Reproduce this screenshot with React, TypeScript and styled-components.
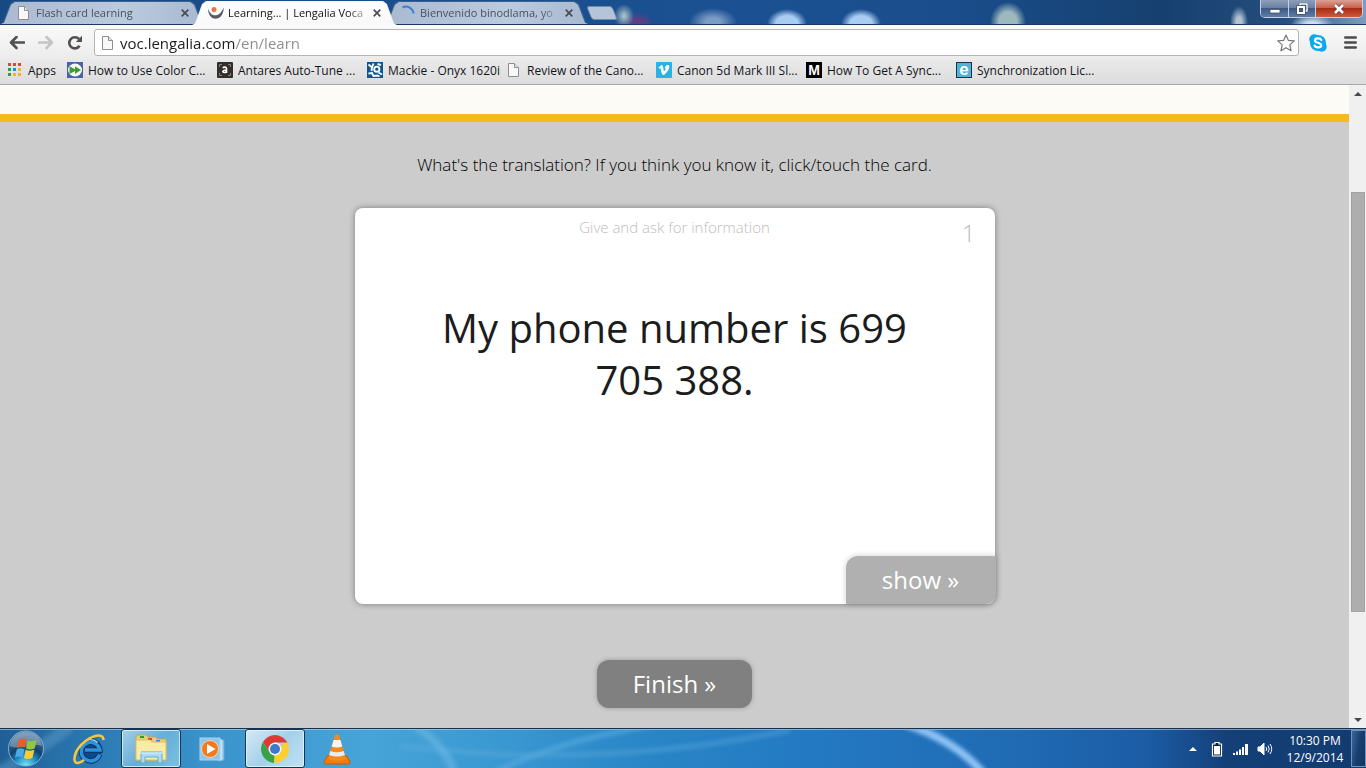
import React from "react";
import styled, { createGlobalStyle, css } from "styled-components";

const GlobalStyle = createGlobalStyle`
  *, *::before, *::after { box-sizing: border-box; }
  body { margin: 0; font-family: "Open Sans", "Noto Sans", sans-serif; color: #1c1c1c; }
  button { font: inherit; border: 0; padding: 0; background: none; color: inherit; cursor: pointer; }
  p, h1 { margin: 0; }
  a { color: inherit; text-decoration: none; }
  svg { display: block; flex: none; }
`;

const Screen = styled.div`
  display: flex;
  flex-direction: column;
  height: 100vh;
  min-height: 480px;
  overflow: hidden;
`;

/* ---------- tab strip ---------- */

const TabStrip = styled.header`
  display: flex;
  height: 25px;
  padding-top: 1px;
  border-bottom: 1px solid #173a66;
  background:
    radial-gradient(ellipse 10px 12px at 624px 16px, #b4c9cc 0, transparent 100%),
    radial-gradient(ellipse 16px 12px at 638px 24px, #5a3f86 40%, transparent 100%),
    radial-gradient(ellipse 24px 14px at 713px 22px, #7c9cc4 30%, transparent 100%),
    radial-gradient(ellipse 20px 15px at 787px 24px, #a9cdf2 55%, transparent 100%),
    radial-gradient(ellipse 20px 15px at 861px 24px, #a9cdf2 55%, transparent 100%),
    radial-gradient(ellipse 18px 20px at 1008px 22px, #9db9bd 50%, transparent 100%),
    radial-gradient(ellipse 9px 16px at 1239px 22px, #b3c2d0 30%, transparent 100%),
    radial-gradient(ellipse 22px 12px at 1312px 26px, #cfe2f5 30%, transparent 100%),
    linear-gradient(90deg, #174a85 0%, #1b5192 55%, #1a4d8b 70%, #16406f 85%, #254d7d 94%, #7f9dbf 100%);
`;

const tabShape = `polygon(0 100%, 3px 94%, 10px 12%, 14px 0, calc(100% - 14px) 0, calc(100% - 10px) 12%, calc(100% - 3px) 94%, 100% 100%)`;

const Tab = styled.div<{ $active?: boolean }>`
  position: relative;
  z-index: ${(p) => (p.$active ? 2 : 1)};
  display: flex;
  align-items: center;
  flex: 0 1 205px;
  min-width: 0;
  height: ${(p) => (p.$active ? 24 : 23)}px;
  padding: 0 15px 0 16px;
  gap: 4px;
  background: ${(p) => (p.$active ? "#f2f3f5" : "#3d5f8b")};
  clip-path: ${tabShape};
  font-size: 11px;
  line-height: 22px;
  color: ${(p) => (p.$active ? "#111" : "#4b4f5c")};
  & + & { margin-left: -13px; }
  &::before {
    content: "";
    position: absolute;
    z-index: -1;
    inset: 1px 1px 0;
    clip-path: ${tabShape};
    background: ${(p) =>
      p.$active ? "linear-gradient(#ffffff, #f8f8f8)" : "linear-gradient(100deg, #a9b9d0, #bccade 60%, #a6b8d0)"};
  }
`;

const TabTitle = styled.a`
  flex: 1;
  min-width: 0;
  overflow: hidden;
  white-space: nowrap;
  mask-image: linear-gradient(90deg, #000 calc(100% - 20px), rgba(0, 0, 0, 0.15));
`;

const TabClose = styled.button`
  display: grid;
  place-items: center;
  width: 10px;
  height: 16px;
  color: #4a4d55;
`;

const NewTab = styled.button`
  width: 26px;
  height: 14px;
  margin-top: 5px;
  border: 1px solid #6d8cb3;
  border-radius: 3px;
  background: #b6c4d8;
  transform: skewX(22deg);
`;

const WindowControls = styled.div`
  display: flex;
  height: 18px;
  margin: -1px 3px 0 auto;
  border: 1px solid #c3d1e2;
  border-top: 0;
  border-radius: 0 0 5px 5px;
  overflow: hidden;
`;

const WindowButton = styled.button<{ $close?: boolean }>`
  display: grid;
  place-items: center;
  width: ${(p) => (p.$close ? 47 : 27)}px;
  background: ${(p) =>
    p.$close
      ? "linear-gradient(#dba194, #c8614e 45%, #a92c15 50%, #cf5a3c)"
      : "linear-gradient(#8d9fb8, #6b82a3 45%, #3d5a83 50%, #5f7da6)"};
  & + & { border-left: 1px solid #c3d1e2; }
`;

/* ---------- toolbar ---------- */

const Toolbar = styled.div`
  display: flex;
  align-items: center;
  height: 35px;
  padding: 0 8px 0 9px;
  background: linear-gradient(#fafafa, #ebebeb);
`;

const ToolButton = styled.button<{ $gap?: number }>`
  display: grid;
  place-items: center;
  width: 16px;
  height: 20px;
  margin-right: ${(p) => p.$gap ?? 0}px;
`;

const AddressBar = styled.form`
  display: flex;
  align-items: center;
  flex: 1;
  gap: 4px;
  height: 27px;
  margin-right: 10px;
  padding: 0 5px;
  border: 1px solid #b4b4b4;
  border-radius: 3px;
  background: #fff;
`;

const AddressInput = styled.input`
  flex: 1;
  min-width: 0;
  height: 24px;
  padding: 0;
  border: 0;
  outline: 0;
  font: 15px/24px "Open Sans", sans-serif;
  color: #222;
  -webkit-text-fill-color: transparent;
  background: linear-gradient(90deg, #1c1c1c 115px, #8c8c8c 115px);
  background-clip: text;
`;

const Bookmarks = styled.nav`
  display: flex;
  height: 25px;
  padding: 0 7px;
  overflow: hidden;
  border-bottom: 1px solid #a9a9a9;
  background: linear-gradient(#e9e9e9, #dcdcdc);
`;

const Bookmark = styled.a<{ $width: number }>`
  display: flex;
  flex: none;
  align-items: center;
  gap: 5px;
  width: ${(p) => p.$width}px;
  height: 20px;
  font-size: 12px;
  white-space: nowrap;
  color: #14141c;
`;

/* ---------- page ---------- */

const Viewport = styled.div`
  display: flex;
  flex: 1;
  min-height: 0;
`;

const Page = styled.main`
  display: flex;
  flex-direction: column;
  align-items: center;
  flex: 1;
  min-width: 0;
  overflow: hidden;
  background: #ccc;
`;

const PageHeader = styled.div`
  flex: none;
  align-self: stretch;
  height: 37px;
  border-bottom: 8px solid #f8b920;
  background: #fcfbf6;
`;

const Prompt = styled.p`
  margin: 31px 0;
  font-size: 17px;
  line-height: 24px;
  font-weight: 300;
  color: #000;
`;

const Card = styled.section`
  display: flex;
  flex-direction: column;
  flex: none;
  width: min(640px, 94%);
  height: 396px;
  border-radius: 8px;
  background: #fff;
  box-shadow: 0 0 6px rgba(0, 0, 0, 0.4);
`;

const CardTop = styled.div`
  display: grid;
  grid-template-columns: 1fr auto 1fr;
  padding: 7px 19px 0;
  color: #bdbdbd;
  font-weight: 300;
`;

const Topic = styled.p`
  grid-column: 2;
  font-size: 15px;
  line-height: 24px;
`;

const CardNumber = styled.p`
  justify-self: end;
  font-size: 24px;
  line-height: 36px;
`;

const Phrase = styled.h1`
  flex: 1;
  padding: 51px 64px 0;
  font-size: 40px;
  line-height: 52px;
  font-weight: 400;
  text-align: center;
`;

const actionButton = css`
  height: 48px;
  font-size: 24px;
  line-height: 48px;
  color: #fff;
`;

const ShowButton = styled.button`
  ${actionButton}
  align-self: flex-end;
  width: 150px;
  margin-right: -1px;
  border-radius: 12px 0 10px 0;
  background: #b0b0b0;
  box-shadow: 0 0 6px rgba(0, 0, 0, 0.2);
`;

const FinishButton = styled.button`
  ${actionButton}
  flex: none;
  width: 155px;
  margin-top: 56px;
  border-radius: 12px;
  background: #808080;
  box-shadow: 0 0 5px rgba(0, 0, 0, 0.25);
`;

const Scrollbar = styled.div`
  display: grid;
  grid-template-rows: 17px 1fr 17px;
  flex: none;
  width: 17px;
  background: #f0f0f0;
`;

const ScrollButton = styled.button`
  display: grid;
  place-items: center;
`;

const ScrollTrack = styled.div`
  padding: 90px 1px 0 2px;
`;

const ScrollThumb = styled.div`
  height: 81%;
  max-height: 421px;
  border: 1px solid #a2a2a2;
  background: #aeaeae;
`;

/* ---------- taskbar ---------- */

const Taskbar = styled.footer`
  position: relative;
  isolation: isolate;
  display: flex;
  align-items: stretch;
  flex: none;
  height: 40px;
  border-top: 1px solid #16304e;
  background: linear-gradient(90deg, #205f95 0%, #2b7ab3 7%, #3a93cb 15%, #47a4d8 27%, #3b99d2 36%, #2a86c6 47%, #2379c2 60%, #1f69b2 76%, #1b5ca5 84%, #143f77 90%, #123c70 100%);
  box-shadow: inset 0 1px 0 rgba(190, 215, 235, 0.6);
`;

const Wallpaper = styled.svg`
  position: absolute;
  z-index: -1;
  inset: 1px 0 0;
  width: 100%;
  height: 38px;
`;

const StartButton = styled.button`
  display: grid;
  place-items: center;
  width: 54px;
  margin-right: 5px;
`;

const TaskButton = styled.button<{ $open?: boolean; $focused?: boolean }>`
  display: grid;
  place-items: center;
  width: 60px;
  margin-right: 2px;
  border: 1px solid transparent;
  border-radius: 3px;
  ${(p) =>
    p.$open &&
    css`
      border-color: #123653;
      background: ${p.$focused
        ? "linear-gradient(135deg, #d5e9f5, #a5d0ea 50%, #c0e2f4)"
        : "linear-gradient(135deg, #a5cfe8, #64aed9 50%, #7cc1e4)"};
      box-shadow: inset 0 0 0 1px rgba(235, 247, 255, 0.75);
    `}
`;

const Tray = styled.div`
  display: flex;
  align-items: center;
  gap: 8px;
  margin-left: auto;
`;

const TrayButton = styled.button`
  display: grid;
  place-items: center;
  width: 16px;
  height: 20px;
`;

const Clock = styled.time`
  width: 68px;
  font-size: 12px;
  line-height: 17px;
  text-align: center;
  white-space: nowrap;
  color: #fff;
`;

const ShowDesktop = styled.button`
  align-self: stretch;
  width: 15px;
  margin: 1px 0 1px -6px;
  border: 1px solid #6f94bd;
  background: linear-gradient(100deg, #3d6797, #173f70 50%, #123661);
`;

/* ---------- drawings ---------- */

const FileIcon = () => (
  <svg width="16" height="16" viewBox="0 0 16 16" fill="#f8f8f8" stroke="#8e8e8e">
    <path d="M2.500 1.500h6l4 4v9h-10z" />
    <path d="M8.500 1.500v4h4" fill="#e4e4e4" />
  </svg>
);

const CloseIcon = () => (
  <svg width="8" height="8" viewBox="0 0 8 8" stroke="currentColor" strokeWidth="1.700">
    <path d="M.7.7l6.600 6.600M7.300.7L.7 7.300" />
  </svg>
);

const LengaliaIcon = () => (
  <svg width="16" height="16" viewBox="0 0 16 16">
    <circle cx="6" cy="4.500" r="2.500" fill="#e8763f" />
    <path d="M0 3.500C2 9 4.500 10.500 8 10.200 11.500 10 13.500 7 15.800 2.500 15.500 10 12 13.800 7.500 13.800 3 13.800 0 9 0 3.500z" fill="#5b5b63" />
  </svg>
);

const SpinnerIcon = () => (
  <svg width="16" height="16" viewBox="0 0 16 16" fill="none" stroke="#3f7fd0" strokeWidth="2">
    <path d="M2.500 2.500A7.500 7.500 0 0 1 13.500 8.500" />
  </svg>
);

const AppsIcon = () => {
  const colors = ["#d64a3b", "#d64a3b", "#d64a3b", "#2f9a57", "#3d7fe0", "#eeb32b", "#2f9a57", "#eeb32b", "#eeb32b"];
  return (
    <svg width="16" height="16" viewBox="0 0 16 16">
      {colors.map((c, i) => (
        <rect key={i} x={1 + (i % 3) * 5} y={1 + Math.floor(i / 3) * 5} width="3" height="3" fill={c} />
      ))}
    </svg>
  );
};

const ForwardSiteIcon = () => (
  <svg width="16" height="16" viewBox="0 0 16 16">
    <rect width="16" height="16" fill="#4c62a8" />
    <ellipse cx="8" cy="8" rx="7" ry="6.500" fill="#f6faf4" />
    <path d="M2.500 4.200L8 7.200V4.200L14 8l-6 4V9l-5.500 3z" fill="#3d9a35" />
  </svg>
);

const Glyph = styled.span<{ $bg: string; $edge?: string; $size?: number }>`
  flex: none;
  width: 16px;
  height: 16px;
  border: 1px solid ${(p) => p.$edge ?? p.$bg};
  background: ${(p) => p.$bg};
  color: #fff;
  font: bold ${(p) => p.$size ?? 14}px/14px "Liberation Sans", sans-serif;
  text-align: center;
`;

const AntaresIcon = () => (
  <svg width="16" height="16" viewBox="0 0 16 16">
    <rect width="16" height="16" rx="1" fill="#332d2b" />
    <path d="M2.500 5V2.500H5M11 2.500h2.500V5M13.500 11v2.500H11M5 13.500H2.500V11" stroke="#8b8380" fill="none" />
    <path d="M5.800 5.900c1-1.200 3.700-1 3.700.7V11M9.400 8C5.500 7.800 5 10.500 7.200 10.500c1.400 0 2.200-.9 2.200-1.800" stroke="#fff" strokeWidth="1.600" fill="none" />
  </svg>
);

const MackieIcon = () => (
  <svg width="16" height="16" viewBox="0 0 16 16" fill="none" stroke="#fff" strokeWidth="1.900">
    <rect width="16" height="16" fill="#11558f" stroke="none" />
    <path d="M1.500 2.500L5 5.500 6.500 1.500M5 5.500L4.500 9M1.500 11.500L5 11l1.500 3 4-.5 2 1M11.500 10.500l3.500 2" />
    <circle cx="9.800" cy="7.200" r="2.600" />
    <path d="M10.500 2l3.500 1" />
  </svg>
);

const VimeoIcon = () => (
  <svg width="16" height="16" viewBox="0 0 16 16">
    <rect width="16" height="16" rx="1" fill="#27b3e6" />
    <path d="M2.500 5.500L5.500 3c1.800-.5 1.700 4.500 2.600 6.300C9.500 8 10.500 6 8.700 6.200 9.300 3.500 11 2.500 12.700 3c2 1-.7 6.800-4.500 9.800-2.700 1.300-2.700-4-3.700-6.600L3 6.500z" fill="#fff" />
  </svg>
);

const BackIcon = ({ color }: { color: string }) => (
  <svg width="16" height="14" viewBox="0 0 16 14" stroke={color} strokeWidth="2.600" fill="none">
    <path d="M7.500 1L2 6.500 7.500 12M2 6.500h13" strokeLinecap="round" strokeLinejoin="round" />
  </svg>
);

const ForwardIcon = ({ color }: { color: string }) => (
  <svg width="16" height="14" viewBox="0 0 16 14" stroke={color} strokeWidth="2.600" fill="none">
    <path d="M8.500 1L14 6.500 8.500 12M14 6.500H1" strokeLinecap="round" strokeLinejoin="round" />
  </svg>
);

const ReloadIcon = () => (
  <svg width="16" height="16" viewBox="0 0 16 16">
    <path d="M12.600 10.800A5.600 5.600 0 1 1 12 4" stroke="#505050" strokeWidth="2.600" fill="none" />
    <path d="M15 .8v6.200H8.800z" fill="#505050" />
  </svg>
);

const StarIcon = () => (
  <svg width="18" height="18" viewBox="0 0 18 18">
    <path d="M9 1l2.300 5.300 6 .6-4.500 4 1.300 5.900L9 13.700l-5.100 3.100 1.300-5.900-4.500-4 6-.6z" fill="#fff" stroke="#777" strokeWidth="1.200" strokeLinejoin="round" />
  </svg>
);

const SkypeIcon = () => (
  <svg width="18" height="18" viewBox="0 0 18 18">
    <circle cx="5.300" cy="5.300" r="5" fill="#0aa9ea" />
    <circle cx="12.700" cy="12.700" r="5" fill="#0aa9ea" />
    <circle cx="9" cy="9" r="8" fill="#0aa9ea" />
    <path d="M12.300 6C11.500 3.700 6 3.700 6 6.400c0 3 6.200 1.700 6.200 4.800 0 3-5.900 2.900-6.600.3" fill="none" stroke="#fff" strokeWidth="2.200" strokeLinecap="round" />
  </svg>
);

const MenuIcon = () => (
  <svg width="13" height="13" viewBox="0 0 13 13" stroke="#4c4c4c" strokeWidth="2.600" strokeLinecap="round">
    <path d="M1.300 1.500h10.400M1.300 6.500h10.400M1.300 11.500h10.400" />
  </svg>
);

const MinimizeIcon = () => (
  <svg width="12" height="12" viewBox="0 0 12 12">
    <rect x="1" y="6.500" width="10" height="3.500" fill="#fff" stroke="#46566f" strokeWidth=".8" />
  </svg>
);

const RestoreIcon = () => (
  <svg width="12" height="12" viewBox="0 0 12 12" fill="none">
    <path d="M4 3V1h7v7H9" stroke="#3f4f69" strokeWidth="2.600" />
    <path d="M4 3V1h7v7H9" stroke="#fff" strokeWidth="1.400" />
    <rect x="2" y="4" width="6" height="6" stroke="#3f4f69" strokeWidth="3.400" />
    <rect x="2" y="4" width="6" height="6" stroke="#fff" strokeWidth="2" />
  </svg>
);

const WindowCloseIcon = () => (
  <svg width="12" height="12" viewBox="0 0 12 12" fill="none">
    <path d="M2 2l8 8M10 2l-8 8" stroke="#5c3a3a" strokeWidth="4" />
    <path d="M2 2l8 8M10 2l-8 8" stroke="#fff" strokeWidth="2.600" />
  </svg>
);

const Triangle = ({ down, color = "#484848" }: { down?: boolean; color?: string }) => (
  <svg width="8" height="4" viewBox="0 0 8 4">
    <path d={down ? "M0 0h8L4 4z" : "M0 4h8L4 0z"} fill={color} />
  </svg>
);

const WindowsOrb = () => (
  <svg width="38" height="38" viewBox="0 0 38 38">
    <defs>
      <radialGradient id="orb" cx=".5" cy="1" r=".9">
        <stop offset="0" stopColor="#7cecff" />
        <stop offset=".35" stopColor="#1c8cc4" />
        <stop offset=".6" stopColor="#12426f" />
        <stop offset="1" stopColor="#4a7397" />
      </radialGradient>
    </defs>
    <circle cx="18" cy="18.500" r="17.500" fill="url(#orb)" stroke="#7fb0d2" />
    <path d="M2 16C4-3 32-3 34 16c-9-4-20 5-32 0z" fill="#dcebf5" opacity=".35" />
    <path d="M11 9.500c2.500-1.600 5-1.300 7.500 0l-1.700 8.300c-2.500-1.300-5-1.400-7.600 0z" fill="#ee5b2a" />
    <path d="M19.700 10.300c2.500 1.300 5 1.300 9-.2l-2 8.300c-3 1.400-6 1.400-8.700 0z" fill="#8fc642" />
    <path d="M8.800 19.200c2.500-1.400 5-1.300 7.600 0l-1.800 8.300c-2.500-1.500-5-1.400-7.600 0z" fill="#4aa9ea" />
    <path d="M17.700 19.800c2.500 1.300 5 1.300 8.700 0l-2 8.200c-3 1.400-6 1.400-8.500 0z" fill="#fcca34" />
  </svg>
);

const ExplorerEIcon = () => (
  <svg width="34" height="32" viewBox="0 0 34 32" fill="none">
    <circle cx="18.500" cy="16.500" r="11.500" fill="#0d4a8c" />
    <path d="M27.500 21.500A9.300 9.300 0 1 1 27.800 17H13" stroke="#0f3260" strokeWidth="5.400" />
    <path d="M27.500 21.500A9.300 9.300 0 1 1 27.800 17H13" stroke="#2b93dc" strokeWidth="3.600" />
    <path d="M11 10.500a9.500 9.500 0 0 1 14.500-1" stroke="#9adcff" strokeWidth="1.400" />
    <path d="M31.500 7C31.500-1 19 2.500 10 11 1 20 .5 31 6 30c2.200-.4 4.500-1.700 6-3" stroke="#f5c53c" strokeWidth="2.600" />
  </svg>
);

const FolderIcon = () => (
  <svg width="32" height="30" viewBox="0 0 32 30">
    <path d="M1 3l1-2h9l2 2h8l1 2h9v21H1z" fill="#e9cf72" stroke="#c7a951" />
    <rect x="5" y="2" width="4" height="2" fill="#2f9a3d" />
    <rect x="13" y="4" width="4" height="2" fill="#cf4a2b" />
    <rect x="21" y="6" width="4" height="2" fill="#2f8fd6" />
    <path d="M1 6h14l2 2h14v18H1z" fill="#f9eaa4" stroke="#d9bf66" />
    <path d="M6 29V18h21v11h-4v-6H10v6z" fill="#a8dcf5" stroke="#62abd8" />
    <path d="M4 19h24" stroke="#e8faff" />
  </svg>
);

const MediaPlayerIcon = () => (
  <svg width="28" height="26" viewBox="0 0 28 26">
    <path d="M19 3l6 1v20l-6 1z" fill="#9dd0ee" stroke="#5fa9d6" />
    <path d="M22 3.500v21" stroke="#e5f5ff" />
    <rect x="1" y="2" width="20" height="22" fill="#8cc6ea" stroke="#a9d6f0" />
    <circle cx="11" cy="13" r="8.500" fill="#f07a1d" stroke="#fbd3ac" />
    <path d="M8 8l8.500 5L8 18z" fill="#fff" />
  </svg>
);

const ChromeIcon = () => (
  <svg width="30" height="30" viewBox="0 0 30 30">
    <path d="M15 15L27.100 8A14 14 0 0 1 15 29z" fill="#fbcf2f" />
    <path d="M15 8.500h12.400a14 14 0 0 0-.3-.5A14 14 0 0 0 2.900 8l6.500 10.300z" fill="#dd3b32" />
    <path d="M20.600 18.300L15 29l-5.600-10.700z" fill="#fbcf2f" />
    <path d="M2.900 8l6.500 10.300 5 1.500L14 29A14 14 0 0 1 2.900 8z" fill="#37a348" />
    <circle cx="15" cy="15" r="6.500" fill="#f4f7f8" />
    <circle cx="15" cy="15" r="5" fill="#3c79cc" />
  </svg>
);

const VlcIcon = () => (
  <svg width="28" height="32" viewBox="0 0 28 32">
    <path d="M4 23h20l3 6.500q0 1.500-1.500 1.500h-23Q1 31 1 29.500z" fill="#ee7c12" stroke="#c85c05" />
    <path d="M12 2q2-1.500 4 0l7 24q-9 4-18 0z" fill="#f28a1c" />
    <path d="M10.600 7h6.800l1.900 6.500q-5.300 2-10.600 0z" fill="#f4f4f4" />
    <path d="M7.300 18q6.700 2.500 13.400 0l1.200 4q-7.900 3-15.800 0z" fill="#ececec" />
  </svg>
);

const BatteryIcon = () => (
  <svg width="12" height="16" viewBox="0 0 12 16">
    <path d="M4 1.500h4v1.500h2.500v12h-9V3H4z" fill="#0b2444" stroke="#fff" strokeWidth="1.200" />
    <rect x="3" y="5" width="6" height="8.500" fill="#fff" />
  </svg>
);

const SignalIcon = () => (
  <svg width="16" height="12" viewBox="0 0 16 12" fill="#fff">
    <path d="M0 10h2v2H0zM3 8.500h2V12H3zM6 6.500h2V12H6zM9 4h2v8H9zM12 1h3v11h-3z" />
  </svg>
);

const SpeakerIcon = () => (
  <svg width="16" height="14" viewBox="0 0 16 14" fill="none" stroke="#fff">
    <path d="M1 5h2l4-4v12L3 9H1z" fill="#fff" />
    <path d="M9 5q1.500 2 0 4M11 3.500q2.500 3.500 0 7M13 2q3.500 5 0 10" />
  </svg>
);

/* ---------- data ---------- */

const tabs = [
  { title: "Flash card learning", icon: <FileIcon /> },
  { title: "Learning... | Lengalia Voca", icon: <LengaliaIcon />, active: true },
  { title: "Bienvenido binodlama, yo", icon: <SpinnerIcon /> },
];

const bookmarks = [
  { label: "Apps", width: 60, icon: <AppsIcon /> },
  { label: "How to Use Color C...", width: 150, icon: <ForwardSiteIcon /> },
  { label: "Antares Auto-Tune ...", width: 150, icon: <AntaresIcon /> },
  { label: "Mackie - Onyx 1620i", width: 139, icon: <MackieIcon /> },
  { label: "Review of the Cano...", width: 150, icon: <FileIcon /> },
  { label: "Canon 5d Mark III Sl...", width: 150, icon: <VimeoIcon /> },
  { label: "How To Get A Sync...", width: 150, icon: <Glyph $bg="#000">M</Glyph> },
  { label: "Synchronization Lic...", width: 150, icon: <Glyph $bg="#4fb4d8" $edge="#1c3440" $size={17}>e</Glyph> },
];

export default function App() {
  return (
    <Screen>
      <GlobalStyle />
      <TabStrip>
        {tabs.map((t) => (
          <Tab key={t.title} $active={t.active}>
            {t.icon}
            <TabTitle href="#">{t.title}</TabTitle>
            <TabClose aria-label="Close tab"><CloseIcon /></TabClose>
          </Tab>
        ))}
        <NewTab aria-label="New tab" />
        <WindowControls>
          <WindowButton aria-label="Minimize"><MinimizeIcon /></WindowButton>
          <WindowButton aria-label="Restore"><RestoreIcon /></WindowButton>
          <WindowButton aria-label="Close" $close><WindowCloseIcon /></WindowButton>
        </WindowControls>
      </TabStrip>

      <Toolbar>
        <ToolButton aria-label="Back" $gap={13}><BackIcon color="#505050" /></ToolButton>
        <ToolButton aria-label="Forward" $gap={13}><ForwardIcon color="#c4c4c4" /></ToolButton>
        <ToolButton aria-label="Reload" $gap={11}><ReloadIcon /></ToolButton>
        <AddressBar>
          <FileIcon />
          <AddressInput aria-label="Address" defaultValue="voc.lengalia.com/en/learn" />
          <ToolButton type="button" aria-label="Bookmark this page"><StarIcon /></ToolButton>
        </AddressBar>
        <ToolButton aria-label="Skype" $gap={17}><SkypeIcon /></ToolButton>
        <ToolButton aria-label="Menu"><MenuIcon /></ToolButton>
      </Toolbar>
      <Bookmarks>
        {bookmarks.map((b) => (
          <Bookmark key={b.label} href="#" $width={b.width}>{b.icon}{b.label}</Bookmark>
        ))}
      </Bookmarks>

      <Viewport>
        <Page>
          <PageHeader />
          <Prompt>What's the translation? If you think you know it, click/touch the card.</Prompt>
          <Card>
            <CardTop>
              <Topic>Give and ask for information</Topic>
              <CardNumber>1</CardNumber>
            </CardTop>
            <Phrase>My phone number is 699 705 388.</Phrase>
            <ShowButton>show »</ShowButton>
          </Card>
          <FinishButton>Finish »</FinishButton>
        </Page>
        <Scrollbar>
          <ScrollButton aria-label="Scroll up"><Triangle /></ScrollButton>
          <ScrollTrack><ScrollThumb /></ScrollTrack>
          <ScrollButton aria-label="Scroll down"><Triangle down /></ScrollButton>
        </Scrollbar>
      </Viewport>

      <Taskbar>
        <Wallpaper viewBox="0 0 1366 38" preserveAspectRatio="none" fill="none" aria-hidden="true">
          <defs>
            <filter id="soft" x="-20%" y="-50%" width="140%" height="200%"><feGaussianBlur stdDeviation="2" /></filter>
          </defs>
          <g filter="url(#soft)">
            <path d="M905 -6Q955 10 984 44" stroke="#8fc3f5" strokeWidth="8" />
            <path d="M495 42Q560 10 650 -4" stroke="#5eb0e2" strokeWidth="5" opacity=".6" />
            <path d="M400 16Q600 40 790 0" stroke="#5eb0e2" strokeWidth="5" opacity=".4" />
            <path d="M415 -4Q445 15 455 44" stroke="#7cc4e8" strokeWidth="8" opacity=".4" />
            <path d="M-5 44Q40 20 70 -4" stroke="#6ba6cf" strokeWidth="12" opacity=".4" />
          </g>
        </Wallpaper>
        <StartButton aria-label="Start"><WindowsOrb /></StartButton>
        <TaskButton aria-label="Internet Explorer"><ExplorerEIcon /></TaskButton>
        <TaskButton aria-label="File Explorer" $open><FolderIcon /></TaskButton>
        <TaskButton aria-label="Media Player"><MediaPlayerIcon /></TaskButton>
        <TaskButton aria-label="Chrome" $open $focused><ChromeIcon /></TaskButton>
        <TaskButton aria-label="VLC"><VlcIcon /></TaskButton>
        <Tray>
          <TrayButton aria-label="Show hidden icons"><Triangle color="#fff" /></TrayButton>
          <TrayButton aria-label="Battery"><BatteryIcon /></TrayButton>
          <TrayButton aria-label="Network"><SignalIcon /></TrayButton>
          <TrayButton aria-label="Volume"><SpeakerIcon /></TrayButton>
          <Clock>10:30 PM<br />12/9/2014</Clock>
          <ShowDesktop aria-label="Show desktop" />
        </Tray>
      </Taskbar>
    </Screen>
  );
}
